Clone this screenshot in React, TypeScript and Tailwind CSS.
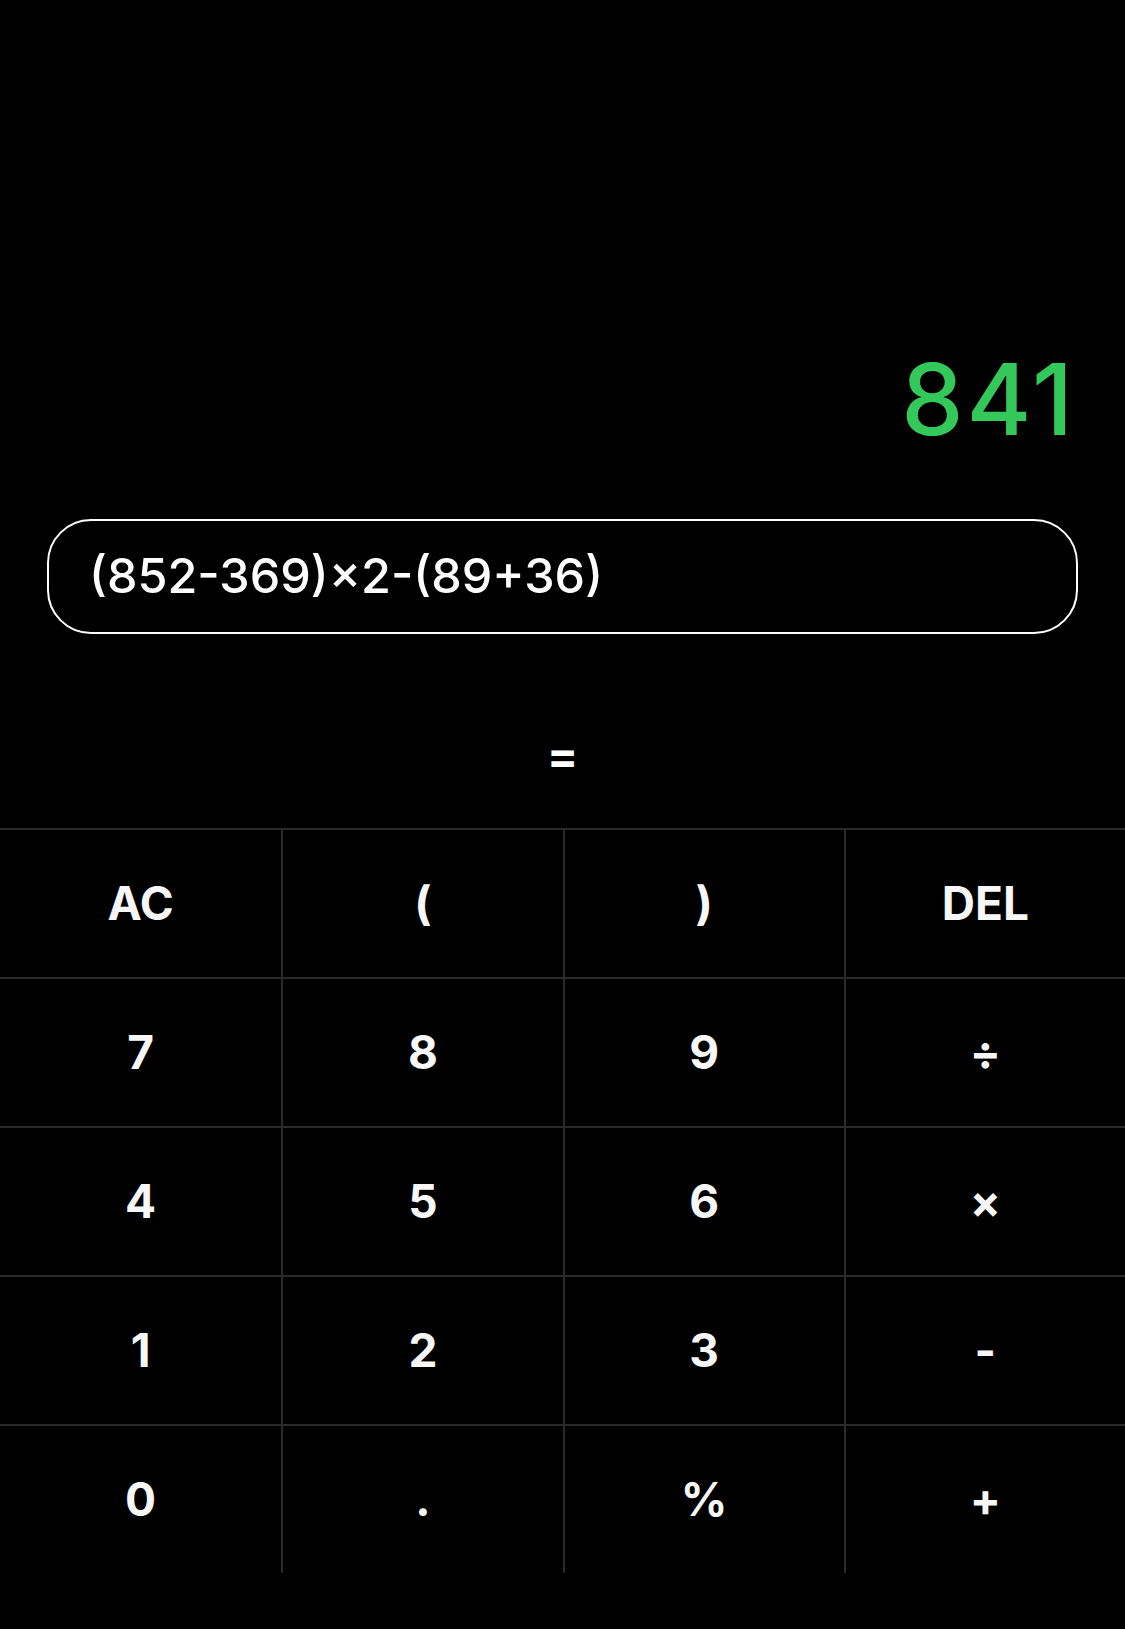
const keys = [
  "AC", "(", ")", "DEL",
  "7", "8", "9", "÷",
  "4", "5", "6", "×",
  "1", "2", "3", "-",
  "0", ".", "%", "+",
];

export default function App() {
  return (
    <div className="w-[1125px] h-[1629px] bg-black text-white flex flex-col overflow-hidden font-['Inter',sans-serif]">
      <div className="pt-[350px] pr-[49px] text-right text-[99px] leading-none font-medium tracking-[3px] text-[#34c759]">
        841
      </div>

      <div className="mt-[70px] mx-[47px] h-[115px] rounded-[44px] border-2 border-white flex items-center pl-[40px]">
        <span className="text-[48.5px] font-[450]">(852-369)×2-(89+36)</span>
      </div>

      <div className="h-[194px] flex items-center justify-center pt-[48px]">
        <span className="text-[46px] font-bold">=</span>
      </div>

      <div className="grid grid-cols-4">
        {keys.map((k, i) => (
          <div
            key={i}
            className={
              "h-[149px] flex items-center justify-center border-t-2 border-[#2a2a2a] text-[46px] font-bold text-[#f7f7f7] " +
              (i % 4 === 0 ? "" : "border-l-2")
            }
          >
            {k}
          </div>
        ))}
      </div>
    </div>
  );
}
